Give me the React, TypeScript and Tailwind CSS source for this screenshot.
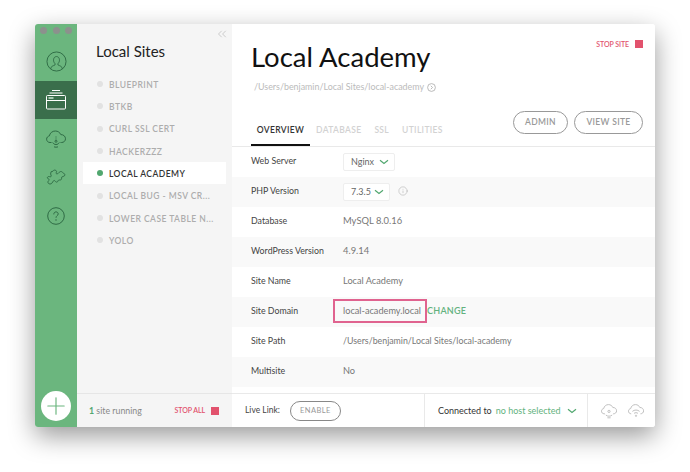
import { ChevronsLeft, Info, Plus } from 'lucide-react';

const sites = [
  'BLUEPRINT',
  'BTKB',
  'CURL SSL CERT',
  'HACKERZZZ',
  'LOCAL ACADEMY',
  'LOCAL BUG - MSV CR...',
  'LOWER CASE TABLE N...',
  'YOLO',
];

function UserIcon() {
  return (
    <svg width="21" height="21" viewBox="0 0 22 22" fill="none" stroke="#2f6b45" strokeWidth="1">
      <circle cx="11" cy="11" r="10" />
      <path d="M4.800 18.800c.3-2.800 2.600-3.200 4.500-4.100.4-.6.3-1.200 0-1.700-1-1-1.500-2.300-1.400-3.800.1-2 1.400-3.400 3.100-3.400s3 1.400 3.100 3.400c.1 1.500-.4 2.800-1.400 3.800-.3.500-.4 1.100 0 1.700 1.900.9 4.200 1.300 4.500 4.100" />
    </svg>
  );
}

function SitesIcon() {
  return (
    <svg width="20" height="20" viewBox="0 0 20 20" fill="none" stroke="#ffffff" strokeWidth="1">
      <path d="M6 .5h8M3.500 3h13" />
      <rect x=".5" y="5.500" width="19" height="13.500" rx="1" />
      <path d="M.5 10.500h19" />
      <path d="M2.500 8h5" stroke="#a9c9b3" strokeWidth="2" />
    </svg>
  );
}

function SignalCloud({ color = '#2f6b45', size = 20 }: { color?: string; size?: number }) {
  return (
    <svg width={size} height={size} viewBox="0 0 20 20" fill="none" stroke={color} strokeWidth="1">
      <path d="M5.500 13.500H4C2 13.500.6 12 .6 10.200c0-1.700 1.200-3 2.800-3.300C3.800 4 6.400 2 9.300 2c2.500 0 4.600 1.400 5.500 3.600 2.700-.1 4.700 1.800 4.700 4.200 0 2.100-1.700 3.700-3.900 3.700h-1.100" />
      <path d="M10 7.500v3" strokeDasharray="1 1" />
      <circle cx="10" cy="12.300" r="1" />
      <path d="M6.700 13.500c.7 1.400 1.900 2 3.300 2s2.600-.6 3.300-2M8 17.800c1.200.5 2.800.5 4 0" />
    </svg>
  );
}

function SmileCloud() {
  return (
    <svg width="16" height="16" viewBox="0 0 20 20" fill="none" stroke="#bdbdbd" strokeWidth="1.200">
      <path d="M5 13.500H4C2 13.500.6 12 .6 10.200c0-1.700 1.200-3 2.800-3.300C3.800 4 6.400 2 9.300 2c2.500 0 4.600 1.400 5.500 3.600 2.700-.1 4.700 1.800 4.700 4.200 0 2.100-1.700 3.700-3.900 3.700H15" />
      <circle cx="10" cy="10.500" r="1.400" />
      <path d="M6 15c2 2 6 2 8 0M8 18.500h4" />
    </svg>
  );
}

function WifiCloud() {
  return (
    <svg width="16" height="16" viewBox="0 0 20 20" fill="none" stroke="#bdbdbd" strokeWidth="1.200">
      <path d="M4 13.500C2 13.500.6 12 .6 10.200c0-1.700 1.200-3 2.800-3.300C3.800 4 6.400 2 9.300 2c2.500 0 4.600 1.400 5.500 3.600 2.700-.1 4.700 1.800 4.700 4.200 0 2.100-1.700 3.700-3.900 3.700" />
      <path d="M5.500 10.500c2.500-2.300 6.500-2.300 9 0M7.500 13c1.400-1.200 3.600-1.200 5 0" />
      <circle cx="10" cy="16" r=".8" />
    </svg>
  );
}

function PuzzleIcon() {
  return (
    <svg width="20" height="17" viewBox="0 0 20 17" fill="none" stroke="#2f6b45" strokeWidth="0.9">
      <path d="M7 2.200c.5-1.500 3-1.500 3.500 0 .3 1-.7 1.500-.3 2.300.4.7 1.500.2 2.300-.4.800-.7 1.500-1.800 2.800-1.600 1.200.2 1.300 1.500 2.300 1.800 1.200.3 1.600 1.500.9 2.500-.7.900-1.900.5-2.700 1.200-.7.700.2 1.800-.6 2.600-.8.800-1.900.1-2.700.6-.7.500-.5 1.600-1.500 1.900-1 .3-1.500-.6-2-1.200-.5-.6-1.300-.5-1.800.2-.7 1.100-1.300 2.900-3.100 2.900-1.500 0-2.600-1.200-2.100-2.500.4-.9 1.400-1 1.300-1.800-.1-.7-1.600-.7-1.900-1.700-.3-1.100 1-1.700 2-1.400.9.200 1.700.2 1.900-.5.200-.8-.7-1.200-.7-2.100 0-.9.400-1.200.4-2.200z" />
    </svg>
  );
}

function HelpIcon() {
  return (
    <svg width="18" height="18" viewBox="0 0 18 18" fill="none" stroke="#2f6b45" strokeWidth="1">
      <circle cx="9" cy="9" r="8.300" />
      <path d="M6.800 7c0-1.300 1-2.100 2.200-2.100s2.200.8 2.200 2c0 1.800-2.200 1.700-2.200 3.500" strokeLinecap="round" />
      <path d="M9 12.600v.8" strokeLinecap="round" />
    </svg>
  );
}

function GreenChevron() {
  return (
    <svg width="10" height="6" viewBox="0 0 10 6" fill="none" stroke="#51a76f" strokeWidth="1.200">
      <path d="M1 1.200 5 4.500 9 1.200" />
    </svg>
  );
}

function StopSquare() {
  return <span className="block w-2 h-2 bg-[#e2526d]" />;
}

function Row({ label, shaded, children }: { label: string; shaded?: boolean; children: React.ReactNode }) {
  return (
    <div className={`h-[30px] flex items-center pl-[19px] pb-[2px] shrink-0 ${shaded ? 'bg-[#f9f9f9]' : 'bg-white'}`}>
      <div className="w-[92px] text-[8.800px] text-[#444444]">{label}</div>
      {children}
    </div>
  );
}

function Select({ value, width }: { value: string; width: string }) {
  return (
    <div className={`h-[18px] mt-[2px] flex items-center justify-between pl-[7px] pr-[5px] bg-white border border-[#eeeeee] rounded-[2px] text-[9px] text-[#666666] ${width}`}>
      <span className="mb-[1px]">{value}</span>
      <GreenChevron />
    </div>
  );
}

export default function App() {
  return (
    <div className="w-[690px] h-[472px] bg-white pt-[24px] pl-[35px] overflow-hidden font-['Lato',sans-serif]">
      <div className="w-[620px] h-[403px] flex rounded-[3px] overflow-hidden shadow-[0_9px_26px_rgba(0,0,0,0.4)]">
        <aside className="w-[42px] shrink-0 bg-[#6bb67e] flex flex-col items-center">
          <div className="h-[57px] w-full flex flex-col items-center pt-[2.500px]">
            <div className="flex gap-[5.500px] h-[7px]">
              <span className="w-[7px] h-[7px] rounded-full bg-[#8c918d]" />
              <span className="w-[7px] h-[7px] rounded-full bg-[#8c918d]" />
              <span className="w-[7px] h-[7px] rounded-full bg-[#8c918d]" />
            </div>
            <div className="flex-1 flex items-center pt-[8px]">
              <UserIcon />
            </div>
          </div>
          <div className="h-[38px] w-full bg-[#3a6e4b] flex items-center justify-center">
            <SitesIcon />
          </div>
          <div className="h-[40px] w-full flex items-center justify-center">
            <SignalCloud />
          </div>
          <div className="h-[36px] w-full flex items-center justify-center">
            <PuzzleIcon />
          </div>
          <div className="h-[42px] w-full flex items-center justify-center">
            <HelpIcon />
          </div>
          <div className="mt-auto mb-[6px] w-[30px] h-[30px] rounded-full bg-white flex items-center justify-center">
            <Plus className="w-[28px] h-[28px] text-[#6bb67e]" strokeWidth={1} />
          </div>
        </aside>

        <div className="w-[155px] shrink-0 bg-[#f5f5f5] flex flex-col relative">
          <ChevronsLeft className="absolute top-[3px] right-[3px] w-[14px] h-[14px] text-[#bbbbbb]" strokeWidth={1.25} />
          <h1 className="pl-[19px] mt-[17px] text-[15px] leading-[20px] text-[#222222]">Local Sites</h1>
          <ul className="mt-[12px] px-[6px]">
            {sites.map((site) => {
              const active = site === 'LOCAL ACADEMY';
              return (
                <li
                  key={site}
                  className={`h-[22.300px] flex items-center pl-[14px] pt-[2px] text-[8.500px] tracking-[0.055em] font-semibold whitespace-nowrap ${active ? 'bg-white text-[#333333]' : 'text-[#adadad]'}`}
                >
                  <span className={`w-[6px] h-[6px] mb-[2px] rounded-full mr-[6px] ${active ? 'bg-[#51a76f]' : 'bg-[#e2e2e2]'}`} />
                  {site}
                </li>
              );
            })}
          </ul>
          <div className="mt-auto h-[34px] border-t border-[#e6e6e6] flex items-center pl-[12px] pr-[13px] justify-between">
            <span className="text-[8.800px] text-[#888888]">
              <b className="text-[#51a76f] font-bold">1</b> site running
            </span>
            <span className="flex items-center gap-[6px] text-[7px] font-semibold tracking-[-0.01em] text-[#e2526d]">
              STOP ALL <StopSquare />
            </span>
          </div>
        </div>

        <main className="flex-1 min-w-0 bg-white flex flex-col">
          <div className="h-[123px] shrink-0 border-b border-[#e9e9e9] relative pl-[19px]">
            <button className="absolute top-[15px] right-[12px] flex items-center gap-[6px] text-[7px] font-semibold tracking-[-0.01em] text-[#e2526d]">
              STOP SITE <StopSquare />
            </button>
            <h2 className="mt-[15px] text-[27.500px] leading-[36px] text-[#111111]">Local Academy</h2>
            <div className="mt-[5px] ml-[3px] flex items-center gap-[3px] text-[8.900px] leading-[14px] text-[#bbbbbb]">
              /Users/benjamin/Local Sites/local-academy
              <svg width="9" height="9" viewBox="0 0 9 9" fill="none" stroke="#aaaaaa" strokeWidth="0.8">
                <circle cx="4.500" cy="4.500" r="3.900" />
                <path d="M3.800 2.800 5.500 4.500 3.800 6.200" />
              </svg>
            </div>
            <div className="absolute left-[19px] bottom-0 flex h-[30px] text-[8.500px] font-semibold tracking-[0.04em] text-[#d2d2d2]">
              <span className="w-[59px] flex items-center justify-center text-[#333333] border-b-2 border-[#111111]">OVERVIEW</span>
              <span className="ml-[6px] flex items-center mb-[2px]">DATABASE</span>
              <span className="ml-[13px] flex items-center mb-[2px]">SSL</span>
              <span className="ml-[13px] flex items-center mb-[2px]">UTILITIES</span>
            </div>
            <div className="absolute right-[12px] top-[87px] flex gap-[6px] text-[8.500px] font-semibold tracking-[0.04em] text-[#999999]">
              <button className="w-[55px] h-[23px] rounded-full border border-[#999999]">ADMIN</button>
              <button className="w-[69px] h-[23px] rounded-full border border-[#999999]">VIEW SITE</button>
            </div>
          </div>

          <div className="flex-1 min-h-0">
            <Row label="Web Server">
              <Select value="Nginx" width="w-[52px]" />
            </Row>
            <Row label="PHP Version" shaded>
              <Select value="7.3.5" width="w-[47px]" />
              <Info className="ml-[8px] w-[10px] h-[10px] text-[#aaaaaa]" strokeWidth={1.25} />
            </Row>
            <Row label="Database">
              <span className="text-[9.400px] text-[#777777]">MySQL 8.0.16</span>
            </Row>
            <Row label="WordPress Version" shaded>
              <span className="text-[9.400px] text-[#777777]">4.9.14</span>
            </Row>
            <Row label="Site Name">
              <span className="text-[9.200px] text-[#777777]">Local Academy</span>
            </Row>
            <Row label="Site Domain" shaded>
              <span className="relative text-[9.200px] text-[#777777]">
                local-academy.local
                <span className="absolute left-[-10px] right-[-6px] top-[-5px] bottom-[-5px] border-2 border-[#e0638f]" />
              </span>
              <span className="ml-[6px] text-[9px] font-semibold tracking-[0.03em] text-[#63b27e]">CHANGE</span>
            </Row>
            <Row label="Site Path">
              <span className="text-[8.800px] text-[#777777]">/Users/benjamin/Local Sites/local-academy</span>
            </Row>
            <Row label="Multisite" shaded>
              <span className="text-[9.200px] text-[#777777]">No</span>
            </Row>
          </div>

          <footer className="h-[34px] shrink-0 border-t border-[#e9e9e9] flex items-center">
            <div className="w-[193px] h-full pl-[13px] flex items-center gap-[10px] border-r border-[#e9e9e9]">
              <span className="text-[8.500px] text-[#444444]">Live Link:</span>
              <button className="w-[51px] h-[20px] rounded-full border border-[#888888] text-[7.500px] tracking-[0.06em] text-[#999999]">ENABLE</button>
            </div>
            <div className="w-[163px] h-full pl-[13px] flex items-center border-r border-[#e9e9e9] text-[9px] whitespace-nowrap">
              <span className="text-[#333333]">Connected to</span>
              <span className="ml-[4px] text-[#63b27e]">no host selected</span>
              <span className="ml-[6px]">
                <GreenChevron />
              </span>
            </div>
            <div className="flex-1 flex items-center pl-[13px] gap-[11px]">
              <SmileCloud />
              <WifiCloud />
            </div>
          </footer>
        </main>
      </div>
    </div>
  );
}
